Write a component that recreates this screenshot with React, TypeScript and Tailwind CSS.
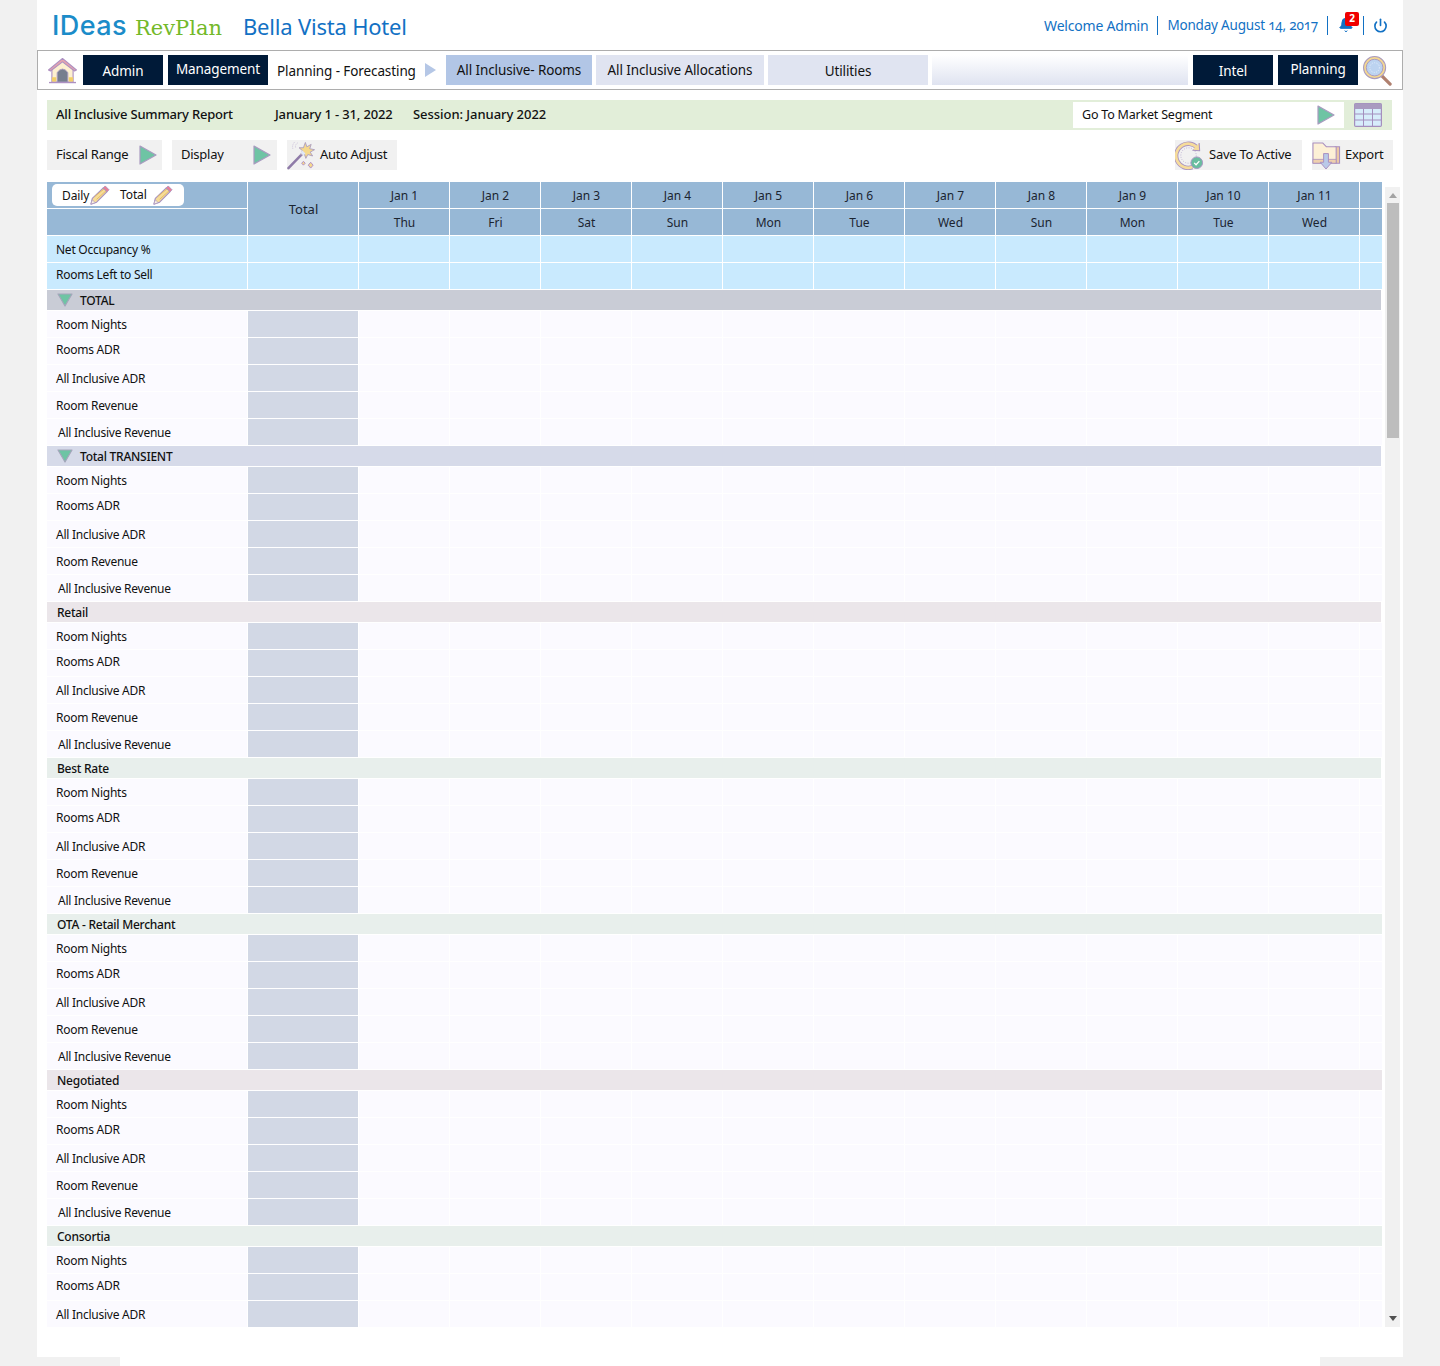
import React from "react"
import { Bell, Power } from "lucide-react"

const days = [
  ["Jan 1", "Thu"],
  ["Jan 2", "Fri"],
  ["Jan 3", "Sat"],
  ["Jan 4", "Sun"],
  ["Jan 5", "Mon"],
  ["Jan 6", "Tue"],
  ["Jan 7", "Wed"],
  ["Jan 8", "Sun"],
  ["Jan 9", "Mon"],
  ["Jan 10", "Tue"],
  ["Jan 11", "Wed"],
]

const metrics = ["Room Nights", "Rooms ADR", "All Inclusive ADR", "Room Revenue", "All Inclusive Revenue"]

const sections = [
  { name: "TOTAL", bg: "bg-[#c9ccd6]", toggle: true, count: 5, width: "w-[1334px]" },
  { name: "Total TRANSIENT", bg: "bg-[#d6dae9]", toggle: true, count: 5, width: "w-[1334px]" },
  { name: "Retail", bg: "bg-[#ebe6ea]", toggle: false, count: 5, width: "w-[1334px]" },
  { name: "Best Rate", bg: "bg-[#e8efec]", toggle: false, count: 5, width: "w-[1334px]" },
  { name: "OTA - Retail Merchant", bg: "bg-[#e8efec]", toggle: false, count: 5, width: "w-[1335px]" },
  { name: "Negotiated", bg: "bg-[#ebe6ea]", toggle: false, count: 5, width: "w-[1335px]" },
  { name: "Consortia", bg: "bg-[#e8efec]", toggle: false, count: 3, width: "w-[1335px]" },
]

const Play = ({ className = "" }: { className?: string }) => (
  <svg viewBox="0 0 18 20" className={`w-[18px] h-[20px] ${className}`}>
    <path d="M1 1 L17 10 L1 19 Z" fill="#6ec4a4" stroke="#a99bc0" strokeWidth="1.2" strokeLinejoin="round" />
  </svg>
)

const Pencil = () => (
  <svg viewBox="0 0 22 22" className="w-[21px] h-[21px]">
    <path d="M2 20 L3.5 14 L15 3 L19 7 L8 18 Z" fill="#f7dc97" stroke="#a893c0" strokeWidth="1.2" strokeLinejoin="round" />
    <path d="M6 12 L16 4 M8 15 L18 6" stroke="#e0b860" strokeWidth="0.9" />
    <path d="M15 3 L17 1 L21 5 L19 7 Z" fill="#ee7d93" stroke="#a893c0" strokeWidth="0.9" />
    <path d="M2 20 L3.5 15.5 L6.5 18.5 Z" fill="#fbf3e0" stroke="#a893c0" strokeWidth="0.7" />
  </svg>
)

const House = () => (
  <svg viewBox="0 0 32 28" className="w-[31px] h-[27px]">
    <path d="M5 12 V26 H27 V12 L16 3 Z" fill="#fdf0cf" stroke="#b094c4" strokeWidth="1.2" />
    <path d="M1.5 13.5 L16 1.5 L30.5 13.5 L28.5 14.5 L16 5 L3.5 14.5 Z" fill="#e6a4ae" stroke="#ad90c2" strokeWidth="1.1" strokeLinejoin="round" />
    <path d="M10.5 26 V16 Q16 9 21.5 16 V26 Z" fill="#767e8e" stroke="#a99bc0" strokeWidth="1" />
    <rect x="5" y="21" width="4.5" height="4.5" fill="#f2cf68" />
    <rect x="22.5" y="21" width="4.5" height="4.5" fill="#f2cf68" />
    <path d="M2 26.5 H30" stroke="#ad90c2" strokeWidth="1.4" />
  </svg>
)

const Magnifier = () => (
  <svg viewBox="0 0 32 32" className="w-[31px] h-[31px]">
    <path d="M20 21 L29 30" stroke="#b0806f" strokeWidth="3.4" strokeLinecap="round" />
    <circle cx="13" cy="13" r="11.4" fill="#f4d890" stroke="#a99bc0" strokeWidth="1.1" />
    <circle cx="13" cy="13" r="8.6" fill="#bcd3f0" stroke="#a99bc0" strokeWidth="1" />
    <circle cx="13" cy="13" r="5" fill="none" stroke="#e5eefb" strokeWidth="1" strokeDasharray="1 1.5" />
  </svg>
)

const Wand = () => (
  <svg viewBox="0 0 30 30" className="w-[29px] h-[29px]">
    <path d="M1.5 28 L18 11" stroke="#8f7ba8" strokeWidth="2.6" strokeLinecap="round" />
    <path d="M19 1.5 L20.5 6 L25 3.5 L23.5 8 L28.5 9 L24 11.5 L26.5 15.5 L21.5 14 L19.5 18 L18 13.5 L14 14.5 L16 10 L12.5 7 L17 7 Z" fill="#f5d98c" stroke="#a99bc0" strokeWidth="0.9" strokeLinejoin="round" />
    <path d="M15 11 L18 14" stroke="#dfe7f8" strokeWidth="3" />
    <path d="M24.5 22 L27 25 L24.5 28 L22 25 Z" fill="#f5d98c" stroke="#b08fc6" strokeWidth="1" />
    <path d="M17 21 L18.8 23 L17 25 L15.2 23 Z" fill="#f5d98c" stroke="#b08fc6" strokeWidth="1" />
    <path d="M11 2 Q8 4 9 7 M8 1 Q5 4 6 8" fill="none" stroke="#c3b6d6" strokeWidth="0.9" strokeDasharray="1 1.2" />
  </svg>
)

const SaveIcon = () => (
  <svg viewBox="0 0 30 30" className="w-[29px] h-[29px]">
    <path d="M23 7 A12.5 12.5 0 1 0 18 27" fill="none" stroke="#a993c2" strokeWidth="4.6" />
    <path d="M23 7 A12.5 12.5 0 1 0 18 27" fill="none" stroke="#f6dc9b" strokeWidth="2.8" />
    <path d="M25 2 L25.5 10 L18 9.5" fill="#f6dc9b" stroke="#a993c2" strokeWidth="1.1" strokeLinejoin="round" />
    <circle cx="14" cy="15" r="8" fill="none" stroke="#b9abd0" strokeWidth="0.9" strokeDasharray="1 1.5" />
    <circle cx="22.5" cy="22.5" r="6" fill="#69bd9f" stroke="#a993c2" strokeWidth="1" />
    <path d="M19.8 22.6 L21.8 24.6 L25.2 20.8" fill="none" stroke="#ffffff" strokeWidth="1.3" />
  </svg>
)

const FolderIcon = () => (
  <svg viewBox="0 0 30 30" className="w-[29px] h-[29px]">
    <path d="M24 6 H28.5 V23 H24 Z" fill="#ecc8a4" stroke="#a98fc0" strokeWidth="1.1" />
    <path d="M1 23 V2 H11 L15 6 H25 V23 Z" fill="#fdf0d6" stroke="#a98fc0" strokeWidth="1.1" strokeLinejoin="round" />
    <path d="M1 19 H25 V23 H1 Z" fill="#efd0ad" stroke="#a98fc0" strokeWidth="0.8" />
    <path d="M12 13 H17 V22 H20.5 L14.5 29 L8.5 22 H12 Z" fill="#b9c9e8" stroke="#a98fc0" strokeWidth="1" strokeLinejoin="round" />
  </svg>
)

const CalendarGrid = () => (
  <svg viewBox="0 0 28 24" className="w-[28px] h-[24px]">
    <rect x="0.6" y="0.6" width="26.8" height="22.8" rx="1.2" fill="#d7edfb" stroke="#a48fbe" strokeWidth="1.2" />
    <rect x="0.6" y="0.6" width="26.8" height="5.4" fill="#a99bc0" />
    <path d="M1 11 H27 M1 17 H27 M9.5 6 V23 M18.5 6 V23" stroke="#a48fbe" strokeWidth="1" />
  </svg>
)

const NavDark = ({ label, pull }: { label: string; pull?: boolean }) => (
  <div className={`h-[30px] bg-[#001a38] text-white flex items-center justify-center ${pull ? "pb-[1px]" : "pt-[3px]"}`}>
    {label}
  </div>
)

const HeaderCell = ({ children, className = "" }: { children: React.ReactNode; className?: string }) => (
  <div className={`bg-[#97b8d6] text-[#1b2430] flex items-center justify-center pl-[1px] ${className}`}>{children}</div>
)

const Row = ({ label, labelClass, bg, totalBg }: { label: string; labelClass: string; bg: string; totalBg: string }) => (
  <div className="flex gap-px h-[26px] text-[12px] tracking-[-0.25px]">
    <div className={`w-[200px] flex items-center ${bg} ${labelClass}`}>{label}</div>
    <div className={`w-[110px] ${totalBg}`} />
    {days.map((d) => (
      <div key={d[0]} className={`w-[90px] ${bg}`} />
    ))}
    <div className={`w-[22px] ${bg}`} />
  </div>
)

const metricClass = ["pl-[9px] pt-[1px]", "pl-[9px] pb-[3px]", "pl-[9px] pt-[1px]", "pl-[9px] pt-[1px]", "pl-[11px] pt-[1px]"]

export default function App() {
  return (
    <div className="min-h-[1366px] bg-[#f1f1f1] font-['Noto_Sans',sans-serif] text-[#111] overflow-hidden">
      <div className="ml-[37px] w-[1366px] h-[1357px] bg-white">
        <header className="h-[50px] flex items-center justify-between pr-[7px]">
          <div className="flex items-baseline pl-[15px]">
            <span className="font-['Inter',sans-serif] font-medium text-[#1b8cc9] text-[27px] leading-none tracking-[0.4px] w-[83px]">IDeas</span>
            <span className="font-['DejaVu_Serif',serif] text-[#73b929] text-[21px] leading-none w-[108px]">RevPlan</span>
            <span className="text-[#1271c4] text-[22px] leading-none tracking-[-0.2px]">Bella Vista Hotel</span>
          </div>
          <div className="flex items-center text-[#1271c4] text-[14px] tracking-[-0.2px]">
            <span className="pr-[9px] border-r border-[#1271c4] leading-[19px]">Welcome Admin</span>
            <span className="pl-[9px] pr-[9px] border-r border-[#1271c4] leading-[19px] text-[13.5px] oldstyle-nums">Monday August 14, 2017</span>
            <div className="relative w-[35px] h-[19px] flex items-center pl-[10px]">
              <Bell size={16} fill="#1271c4" strokeWidth={1.5} />
              <span className="absolute left-[17px] top-[-4px] w-[14px] h-[14px] rounded-[2px] bg-[#f00000] text-white text-[10px] font-bold flex items-center justify-center">2</span>
            </div>
            <div className="w-[33px] h-[19px] border-l border-[#1271c4] flex items-center justify-center">
              <Power size={15} strokeWidth={2.6} />
            </div>
          </div>
        </header>

        <nav className="h-[40px] border border-[#adadad] flex items-center pl-[8px] text-[13.5px] tracking-[-0.1px]">
          <div className="w-[37px] pl-[1px]">
            <House />
          </div>
          <div className="w-[80px]"><NavDark label="Admin" /></div>
          <div className="w-[100px] ml-[5px]"><NavDark label="Management" pull /></div>
          <span className="ml-[9px] w-[148px] text-[#111] pt-[2px]">Planning - Forecasting</span>
          <svg viewBox="0 0 11 14" className="w-[11px] h-[14px]"><path d="M0 0 L11 7 L0 14 Z" fill="#b5c7e6" /></svg>
          <div className="ml-[10px] w-[146px] h-[30px] bg-[#b2c6e6] flex items-center justify-center pt-[1px]">All Inclusive- Rooms</div>
          <div className="ml-[4px] w-[168px] h-[30px] bg-[#e0e4f1] flex items-center justify-center pt-[1px]">All Inclusive Allocations</div>
          <div className="ml-[4px] w-[160px] h-[30px] bg-[#e0e4f1] flex items-center justify-center pt-[2px]">Utilities</div>
          <div className="ml-[4px] w-[256px] h-[30px] bg-gradient-to-b from-white to-[#dfe3f0]" />
          <div className="ml-[5px] w-[80px]"><NavDark label="Intel" /></div>
          <div className="ml-[5px] w-[80px]"><NavDark label="Planning" pull /></div>
          <div className="ml-[4px]"><Magnifier /></div>
        </nav>

        <div className="mt-[10px] ml-[10px] w-[1345px] h-[30px] bg-[#e2eed9] flex items-center pl-[9px] text-[13px] font-medium">
          <span className="w-[219px] tracking-[-0.2px]">All Inclusive Summary Report</span>
          <span className="w-[138px] tracking-[-0.15px]">January 1 - 31, 2022</span>
          <span className="flex-1 tracking-[-0.05px]">Session: January 2022</span>
          <div className="w-[271px] h-[26px] bg-white flex items-center justify-between pl-[9px] pr-[9px] font-normal text-[12.5px] tracking-[-0.2px]">
            <span className="pt-[1px]">Go To Market Segment</span>
            <Play />
          </div>
          <div className="w-[48px] flex justify-end pr-[10px]"><CalendarGrid /></div>
        </div>

        <div className="mt-[10px] ml-[10px] w-[1346px] h-[30px] flex justify-between text-[13px] tracking-[-0.25px]">
          <div className="flex gap-[10px]">
            <div className="w-[115px] bg-[#f1f1f1] flex items-center justify-between pl-[9px] pr-[5px]">
              Fiscal Range <Play />
            </div>
            <div className="w-[105px] bg-[#f1f1f1] flex items-center justify-between pl-[9px] pr-[6px]">
              Display <Play />
            </div>
            <div className="w-[110px] bg-[#f1f1f1] flex items-center">
              <Wand />
              <span className="ml-[4px] tracking-[-0.35px]">Auto Adjust</span>
            </div>
          </div>
          <div className="flex gap-[10px]">
            <div className="w-[127px] bg-[#f1f1f1] flex items-center">
              <SaveIcon />
              <span className="ml-[5px]">Save To Active</span>
            </div>
            <div className="w-[81px] bg-[#f1f1f1] flex items-center">
              <FolderIcon />
              <span className="ml-[4px]">Export</span>
            </div>
          </div>
        </div>

        <div className="mt-[12px] ml-[10px] flex gap-[3px]">
          <div className="w-[1335px] flex flex-col gap-px">
            {/* two line header, total spans both */}
            <div className="flex gap-px h-[53px] text-[12px]">
              <div className="w-[200px] flex flex-col gap-px">
                <div className="h-[26px] bg-[#97b8d6] flex items-center pl-[5px]">
                  <div className="w-[132px] h-[22px] bg-white rounded-[5px] flex items-center pl-[10px] tracking-[-0.1px]">
                    <span className="w-[27px] pt-[1px]">Daily</span>
                    <Pencil />
                    <span className="ml-[10px] w-[32px]">Total</span>
                    <Pencil />
                  </div>
                </div>
                <div className="h-[26px] bg-[#97b8d6]" />
              </div>
              <HeaderCell className="w-[110px] text-[13px] pt-[2px]">Total</HeaderCell>
              {days.map((d) => (
                <div key={d[0]} className="w-[90px] flex flex-col gap-px">
                  <HeaderCell className="h-[26px] pt-[1px]">{d[0]}</HeaderCell>
                  <HeaderCell className="h-[26px] pt-[1px]">{d[1]}</HeaderCell>
                </div>
              ))}
              <div className="w-[22px] flex flex-col gap-px">
                <HeaderCell className="h-[26px]">{""}</HeaderCell>
                <HeaderCell className="h-[26px]">{""}</HeaderCell>
              </div>
            </div>

            <Row label="Net Occupancy %" labelClass="pl-[9px] pt-[1px]" bg="bg-[#c9eafe]" totalBg="bg-[#c9eafe]" />
            <Row label="Rooms Left to Sell" labelClass="pl-[9px] pb-[2px]" bg="bg-[#c9eafe]" totalBg="bg-[#c9eafe]" />

            {sections.map((s) => (
              <React.Fragment key={s.name}>
                <div className={`h-[20px] ${s.width} ${s.bg} flex items-center text-[12px] font-medium tracking-[-0.25px]`}>
                  {s.toggle ? (
                    <>
                      <svg viewBox="0 0 16 14" className="w-[16px] h-[14px] ml-[10px] mr-[7px]">
                        <path d="M1 1 H15 L8 13 Z" fill="#6ec4a4" stroke="#a5a5bb" strokeWidth="1.2" strokeLinejoin="round" />
                      </svg>
                      <span className="pt-[2px]">{s.name}</span>
                    </>
                  ) : (
                    <span className="pl-[10px] pt-[2px]">{s.name}</span>
                  )}
                </div>
                {metrics.slice(0, s.count).map((m, i) => (
                  <Row key={m} label={m} labelClass={metricClass[i]} bg="bg-[#fbfaff]" totalBg="bg-[#d2d8e5]" />
                ))}
              </React.Fragment>
            ))}
          </div>

          <div className="relative w-[15px] mt-[5px] h-[1140px] bg-[#f1f1f1] flex justify-center">
            <div className="absolute top-[16px] w-[12px] h-[235px] bg-[#bdbdbd]" />
            <svg viewBox="0 0 8 5" className="absolute top-[6px] w-[8px] h-[5px]"><path d="M0 5 L4 0 L8 5 Z" fill="#a3a3a3" /></svg>
            <svg viewBox="0 0 8 5" className="absolute bottom-[6px] w-[8px] h-[5px]"><path d="M0 0 L8 0 L4 5 Z" fill="#505050" /></svg>
          </div>
        </div>
      </div>
      {/* footer strip */}
      <div className="ml-[120px] w-[1200px] h-[9px] bg-white" />
    </div>
  )
}
